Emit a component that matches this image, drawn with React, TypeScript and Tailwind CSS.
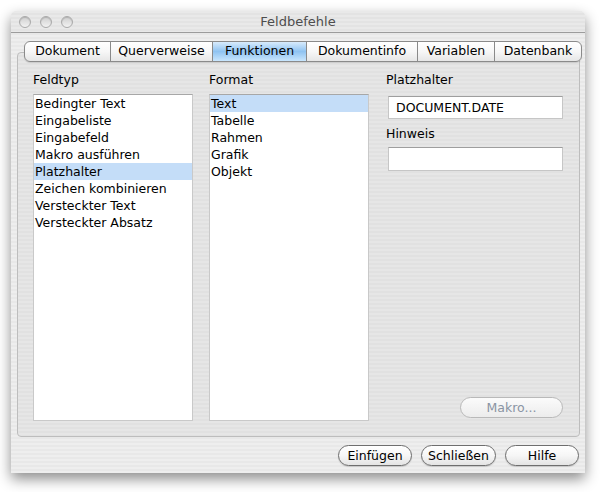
import React from 'react';

const font = { fontFamily: '"DejaVu Sans", "Liberation Sans", sans-serif' };

const tabs = [
  { label: 'Dokument', w: 'w-[85px]' },
  { label: 'Querverweise', w: 'w-[102px]' },
  { label: 'Funktionen', w: 'w-[94px]', active: true },
  { label: 'Dokumentinfo', w: 'w-[111px]' },
  { label: 'Variablen', w: 'w-[77px]' },
  { label: 'Datenbank', w: 'w-[87px]' },
];

const feldtypen = [
  'Bedingter Text',
  'Eingabeliste',
  'Eingabefeld',
  'Makro ausführen',
  'Platzhalter',
  'Zeichen kombinieren',
  'Versteckter Text',
  'Versteckter Absatz',
];

const formate = ['Text', 'Tabelle', 'Rahmen', 'Grafik', 'Objekt'];

// ── Pieces ─────────────────────────────────────────────────────────────────

const Light = () => (
  <span className="block w-[12px] h-[12px] rounded-full border border-[#a9a9a9] bg-gradient-to-b from-[#cfcfcf] to-[#f2f2f2] shadow-[inset_0_1px_1px_rgba(0,0,0,0.15)]" />
);

const ListBox = ({ items, selected }: { items: string[]; selected: string }) => (
  <div className="w-[160px] h-[327px] bg-white border border-[#c9c9c9] border-t-[#a7a7a7]">
    {items.map((it) => (
      <div
        key={it}
        className={
          it === selected
            ? 'h-[17px] leading-[17px] pl-[1px] bg-[#c4ddf8] text-black'
            : 'h-[17px] leading-[17px] pl-[1px] text-black'
        }
      >
        {it}
      </div>
    ))}
  </div>
);

const AquaButton = ({ label, w, disabled }: { label: string; w: string; disabled?: boolean }) => (
  <button
    type="button"
    className={
      disabled
        ? `${w} h-[21px] rounded-full border border-[#b9b9b9] bg-gradient-to-b from-[#fbfbfb] to-[#ececec] text-[#8a94a3] text-[12.5px] leading-[19px]`
        : `${w} h-[21px] rounded-full border border-[#6e6e6e] bg-gradient-to-b from-white via-[#f6f6f6] to-[#e4e4e4] text-black text-[12.5px] leading-[19px] shadow-[0_1px_1px_rgba(0,0,0,0.15)]`
    }
  >
    {label}
  </button>
);

// ── App ────────────────────────────────────────────────────────────────────

export default function App() {
  return (
    <div className="w-[605px] h-[492px] bg-white pt-[11px] pl-[11px]" style={font}>
      <div className="w-[574px] rounded-t-[5px] overflow-hidden shadow-[0_6px_14px_rgba(0,0,0,0.45)] bg-[repeating-linear-gradient(180deg,#eeeeee_0px,#eeeeee_2px,#e8e8e8_2px,#e8e8e8_4px)]">
        {/* Title bar */}
        <div className="h-[22px] grid grid-cols-[1fr_auto_1fr] items-center border-b border-[#9c9c9c] bg-[repeating-linear-gradient(180deg,#e9e9e9_0px,#e9e9e9_2px,#e3e3e3_2px,#e3e3e3_4px)]">
          <div className="flex items-center gap-[9px] pl-[8px]">
            <Light />
            <Light />
            <Light />
          </div>
          <div className="text-[13px] text-[#4d4d4d] leading-[22px]">Feldbefehle</div>
          <div />
        </div>

        {/* Body */}
        <div className="pt-[8px]">
          {/* Tabs */}
          <div className="relative z-10 ml-[13px] flex h-[21px] w-fit rounded-[6px] border border-[#8a8a8a] overflow-hidden bg-gradient-to-b from-white via-[#f7f7f7] to-[#e6e6e6] shadow-[0_1px_1px_rgba(0,0,0,0.12)]">
            {tabs.map((t, i) => (
              <div
                key={t.label}
                className={[
                  t.w,
                  'h-full flex items-center justify-center text-[12.5px] text-black',
                  i > 0 ? 'border-l border-[#8a8a8a]' : '',
                  t.active ? 'bg-gradient-to-b from-[#d8ebfc] via-[#8fc3f1] to-[#c9e6fd]' : '',
                ].join(' ')}
              >
                {t.label}
              </div>
            ))}
          </div>

          {/* Pane */}
          <div className="-mt-[10px] ml-[6px] w-[563px] h-[385px] rounded-[4px] border border-[#bdbdbd] bg-[repeating-linear-gradient(180deg,#e6e6e6_0px,#e6e6e6_2px,#e1e1e1_2px,#e1e1e1_4px)] pt-[19px] pl-[15px] text-[12.5px] text-black">
            <div className="flex">
              <div className="w-[160px]">
                <div className="h-[15px] leading-[15px] mb-[7px]">Feldtyp</div>
                <ListBox items={feldtypen} selected="Platzhalter" />
              </div>
              <div className="w-[160px] ml-[16px]">
                <div className="h-[15px] leading-[15px] mb-[7px]">Format</div>
                <ListBox items={formate} selected="Text" />
              </div>
              <div className="w-[177px] ml-[17px] flex flex-col">
                <div className="h-[15px] leading-[15px]">Platzhalter</div>
                <div className="ml-[2px] mt-[9px] w-[175px] h-[23px] bg-white border border-[#c6c6c6] border-t-[#9e9e9e] pl-[7px] leading-[21px]">
                  DOCUMENT.DATE
                </div>
                <div className="h-[15px] leading-[15px] mt-[7px]">Hinweis</div>
                <div className="ml-[2px] mt-[6px] w-[175px] h-[24px] bg-white border border-[#c6c6c6] border-t-[#9e9e9e]" />
                <div className="mt-auto mb-[3px] flex justify-end pr-0">
                  <AquaButton label="Makro..." w="w-[103px]" disabled />
                </div>
              </div>
            </div>
          </div>

          {/* Dialog buttons */}
          <div className="flex justify-end gap-[9px] pr-[6px] pt-[8px] pb-[7px]">
            <AquaButton label="Einfügen" w="w-[74px]" />
            <AquaButton label="Schließen" w="w-[75px]" />
            <AquaButton label="Hilfe" w="w-[74px]" />
          </div>
        </div>
      </div>
    </div>
  );
}
